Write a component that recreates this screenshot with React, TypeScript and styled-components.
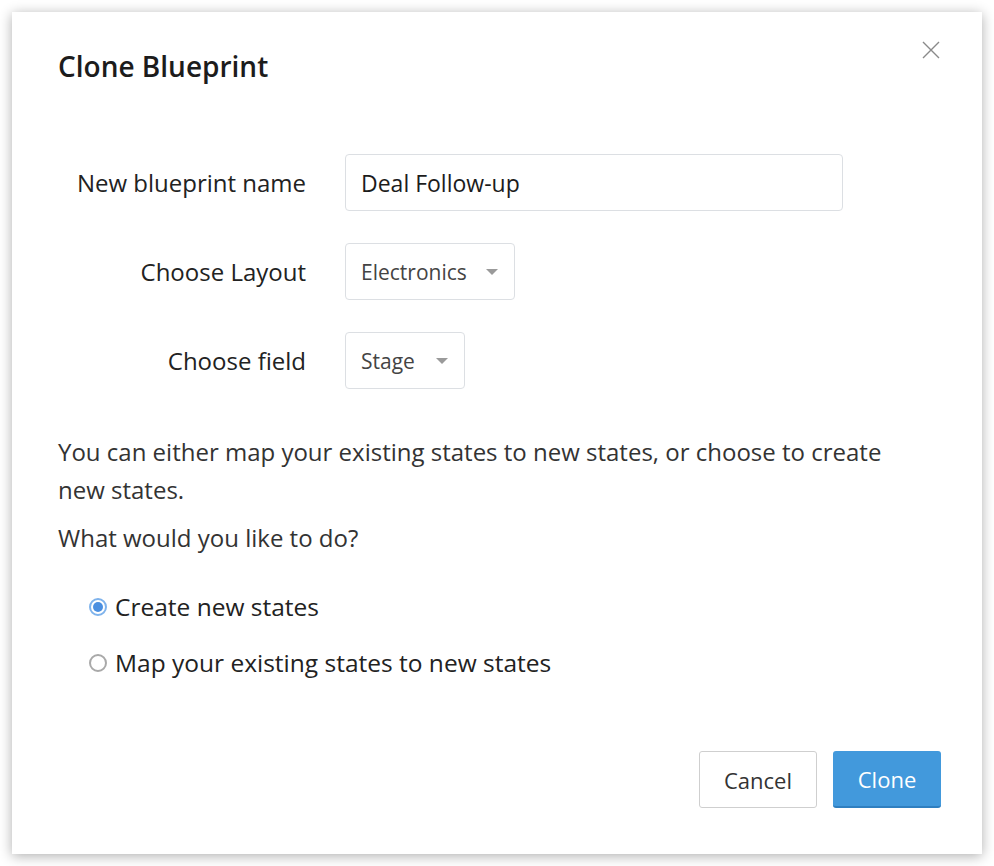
import { useState } from "react";
import styled, { createGlobalStyle } from "styled-components";

const GlobalStyle = createGlobalStyle`
  html, body {
    margin: 0;
    padding: 0;
    background: #fff;
  }
  body {
    font-family: "Open Sans", "Noto Sans", sans-serif;
    color: #222;
  }
`;

const Dialog = styled.div`
  box-sizing: border-box;
  width: 970px;
  height: 842px;
  margin: 12px;
  background: #fff;
  box-shadow: 0 2px 12px rgba(0, 0, 0, 0.32);
  padding: 36px 41px 46px 46px;
  display: flex;
  flex-direction: column;
`;

const Header = styled.div`
  display: flex;
  justify-content: space-between;
  align-items: flex-start;
`;

const Title = styled.h2`
  margin: 0;
  font-size: 28px;
  font-weight: 600;
  color: #1c1c1c;
  line-height: 36px;
`;

const CloseBtn = styled.button`
  border: none;
  background: none;
  padding: 0;
  margin: -10px -2px 0 0;
  width: 24px;
  height: 24px;
  cursor: pointer;
  display: flex;
  align-items: center;
  justify-content: center;
`;

const Form = styled.div`
  display: flex;
  flex-direction: column;
  gap: 32px;
  margin-top: 70px;
`;

const Row = styled.div`
  display: grid;
  grid-template-columns: 248px auto;
  column-gap: 39px;
  align-items: center;
`;

const Label = styled.label`
  text-align: right;
  font-size: 24px;
  color: #222;
  white-space: nowrap;
`;

const TextInput = styled.input`
  box-sizing: border-box;
  width: 498px;
  height: 57px;
  border: 1.5px solid #dcdfe3;
  border-radius: 4px;
  padding: 0 15px;
  font-family: inherit;
  font-size: 23px;
  color: #1c1c1c;
  outline: none;
`;

const Select = styled.div<{ $width: number }>`
  box-sizing: border-box;
  width: ${(p) => p.$width}px;
  height: 57px;
  border: 1.5px solid #dcdfe3;
  border-radius: 4px;
  padding: 0 16px 0 15px;
  display: flex;
  align-items: center;
  justify-content: space-between;
  font-size: 21px;
  color: #444;
`;

const Caret = styled.span`
  width: 0;
  height: 0;
  border-left: 6px solid transparent;
  border-right: 6px solid transparent;
  border-top: 6px solid #9a9a9a;
`;

const Text = styled.p`
  margin: 0;
  font-size: 24px;
  line-height: 38px;
  color: #333;
`;

const Intro = styled(Text)`
  margin-top: 44px;
  max-width: 860px;
`;

const Question = styled(Text)`
  margin-top: 10px;
`;

const Options = styled.div`
  display: flex;
  flex-direction: column;
  gap: 22px;
  margin: 33px 0 0 31px;
`;

const Option = styled.label`
  display: flex;
  align-items: center;
  gap: 8px;
  font-size: 24.5px;
  color: #222;
  cursor: pointer;
  line-height: 34px;
`;

const Radio = styled.span<{ $checked: boolean }>`
  box-sizing: border-box;
  width: 18px;
  height: 18px;
  border-radius: 50%;
  border: 2px solid ${(p) => (p.$checked ? "#7fb3ec" : "#a9a9a9")};
  display: flex;
  align-items: center;
  justify-content: center;
  &::after {
    content: "";
    width: 10px;
    height: 10px;
    border-radius: 50%;
    background: ${(p) => (p.$checked ? "#4b8fe0" : "transparent")};
  }
`;

const Footer = styled.div`
  margin-top: auto;
  display: flex;
  justify-content: flex-end;
  gap: 16px;
`;

const CancelBtn = styled.button`
  box-sizing: border-box;
  width: 118px;
  height: 57px;
  padding: 0;
  background: #fff;
  border: 1.5px solid #cfcfcf;
  border-radius: 3px;
  font-family: inherit;
  font-size: 22px;
  color: #333;
  cursor: pointer;
`;

const CloneBtn = styled(CancelBtn)`
  width: 108px;
  background: #4299dc;
  border: none;
  border-bottom: 2px solid #2f7fc0;
  color: #fff;
`;

const options = ["Create new states", "Map your existing states to new states"];

export default function App() {
  const [choice, setChoice] = useState(0);

  return (
    <>
      <GlobalStyle />
      <Dialog>
        <Header>
          <Title>Clone Blueprint</Title>
          <CloseBtn aria-label="Close">
            <svg width="18" height="18" viewBox="0 0 18 18">
              <path d="M1 1 L17 17 M17 1 L1 17" stroke="#8a8a8a" strokeWidth="1.4" />
            </svg>
          </CloseBtn>
        </Header>

        <Form>
          <Row>
            <Label>New blueprint name</Label>
            <TextInput defaultValue="Deal Follow-up" />
          </Row>
          <Row>
            <Label>Choose Layout</Label>
            <Select $width={170}>
              Electronics <Caret />
            </Select>
          </Row>
          <Row>
            <Label>Choose field</Label>
            <Select $width={120}>
              Stage <Caret />
            </Select>
          </Row>
        </Form>

        <Intro>
          You can either map your existing states to new states, or choose to create new states.
        </Intro>
        <Question>What would you like to do?</Question>

        <Options>
          {options.map((o, i) => (
            <Option key={o} onClick={() => setChoice(i)}>
              <Radio $checked={choice === i} />
              {o}
            </Option>
          ))}
        </Options>

        <Footer>
          <CancelBtn>Cancel</CancelBtn>
          <CloneBtn>Clone</CloneBtn>
        </Footer>
      </Dialog>
    </>
  );
}
